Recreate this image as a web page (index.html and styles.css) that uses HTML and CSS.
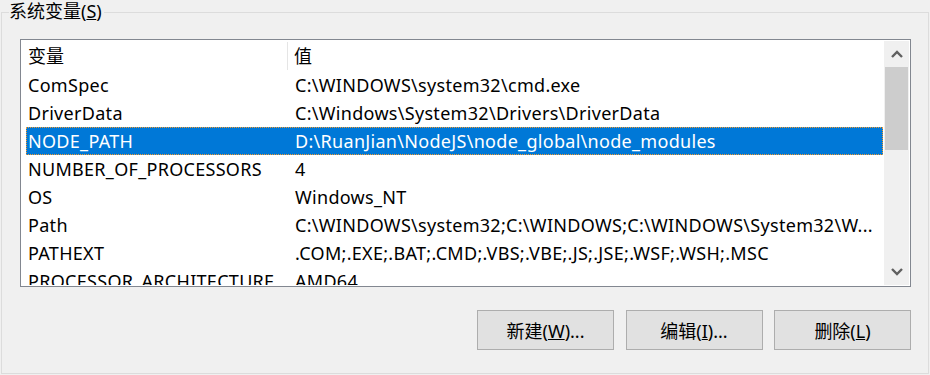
FILE: index.html
```html
<!DOCTYPE html>
<html lang="zh-CN">
<head>
  <meta charset="UTF-8">
  <title>系统变量</title>
  <link rel="stylesheet" href="styles.css">
</head>
<body>
  <fieldset class="group">
    <legend>系统变量(<u>S</u>)</legend>

    <!-- variable list -->
    <div class="listbox">
      <div class="list">
        <div class="list-head">
          <div class="head-name">变量</div>
          <div class="head-value">值</div>
        </div>
        <div class="rows">
          <div class="row"><span class="name">ComSpec</span><span class="value">C:\WINDOWS\system32\cmd.exe</span></div>
          <div class="row"><span class="name">DriverData</span><span class="value">C:\Windows\System32\Drivers\DriverData</span></div>
          <div class="row selected"><span class="name">NODE_PATH</span><span class="value">D:\RuanJian\NodeJS\node_global\node_modules</span></div>
          <div class="row"><span class="name">NUMBER_OF_PROCESSORS</span><span class="value">4</span></div>
          <div class="row"><span class="name">OS</span><span class="value">Windows_NT</span></div>
          <div class="row"><span class="name">Path</span><span class="value">C:\WINDOWS\system32;C:\WINDOWS;C:\WINDOWS\System32\W...</span></div>
          <div class="row"><span class="name">PATHEXT</span><span class="value">.COM;.EXE;.BAT;.CMD;.VBS;.VBE;.JS;.JSE;.WSF;.WSH;.MSC</span></div>
          <div class="row"><span class="name">PROCESSOR_ARCHITECTURE</span><span class="value">AMD64</span></div>
        </div>
      </div>

      <!-- vertical scrollbar -->
      <div class="scrollbar">
        <div class="sb-btn">
          <svg width="12" height="8" viewBox="0 0 12 8"><polyline points="1,7 6,2 11,7" /></svg>
        </div>
        <div class="sb-track">
          <div class="sb-thumb"></div>
        </div>
        <div class="sb-btn">
          <svg width="12" height="8" viewBox="0 0 12 8"><polyline points="1,1 6,6 11,1" /></svg>
        </div>
      </div>
    </div>

    <div class="buttons">
      <button class="btn">新建(<u>W</u>)...</button>
      <button class="btn">编辑(<u>I</u>)...</button>
      <button class="btn">删除(<u>L</u>)</button>
    </div>
  </fieldset>
</body>
</html>
```

FILE: styles.css
```css
:root {
  --bg: #f0f0f0;
  --group-line: #dcdcdc;
  --list-border: #828790;
  --select: #0078d7;
  --focus: #f29a2e;
  --btn-bg: #e1e1e1;
  --btn-border: #adadad;
  --arrow: #606060;
}

* {
  box-sizing: border-box;
}

html, body {
  margin: 0;
  height: 100%;
  overflow: hidden;
}

body {
  background: var(--bg);
  font-family: "Noto Sans", "Noto Sans CJK SC", sans-serif;
  font-size: 18px;
  color: #000;
}

/* Group box */
.group {
  margin: 0 0 0 1px;
  width: 928px;
  height: 374px;
  border: 1px solid var(--group-line);
  padding: 15px 17px 0 18px;
}
.group legend {
  margin-left: -11px;
  padding: 0 2px 0 0;
  line-height: 22px;
  height: 24px;
}

/* List box */
.listbox {
  display: flex;
  height: 248px;
  border: 1px solid var(--list-border);
  padding: 1px;
  background: #fff;
}
.list {
  flex: 1;
  overflow: hidden;
}

.list-head {
  display: flex;
  height: 30px;
  align-items: center;
}
.head-name {
  width: 266px;
  padding-left: 6px;
  height: 28px;
  line-height: 28px;
  border-right: 1px solid #e5e5e5;
}
.head-value {
  padding-left: 6px;
  line-height: 28px;
}

.row {
  display: flex;
  height: 28px;
  margin: 0 1px 0 4px;
  border: 1px dotted transparent;
  line-height: 26px;
  white-space: nowrap;
  letter-spacing: 0.3px;
}
.row .name {
  width: 261px;
  flex: none;
  padding-left: 1px;
  overflow: hidden;
}
.row .value {
  padding-left: 7px;
  overflow: hidden;
}
.row.selected {
  background: var(--select);
  border-color: var(--focus);
  color: #fff;
}

/* Scrollbar */
.scrollbar {
  width: 25px;
  display: flex;
  flex-direction: column;
  background: var(--bg);
}
.sb-btn {
  height: 26px;
  display: flex;
  align-items: center;
  justify-content: center;
}
.sb-btn polyline {
  fill: none;
  stroke: var(--arrow);
  stroke-width: 2.4;
}
.sb-track {
  flex: 1;
  padding: 0 1px;
}
.sb-thumb {
  height: 83px;
  background: #cdcdcd;
}

/* Buttons */
.buttons {
  display: flex;
  justify-content: flex-end;
  gap: 11.5px;
  margin-top: 23px;
}
.btn {
  width: 137px;
  height: 40px;
  background: var(--btn-bg);
  border: 1px solid var(--btn-border);
  font-family: inherit;
  font-size: 18px;
  color: #000;
  padding: 0;
}
```
